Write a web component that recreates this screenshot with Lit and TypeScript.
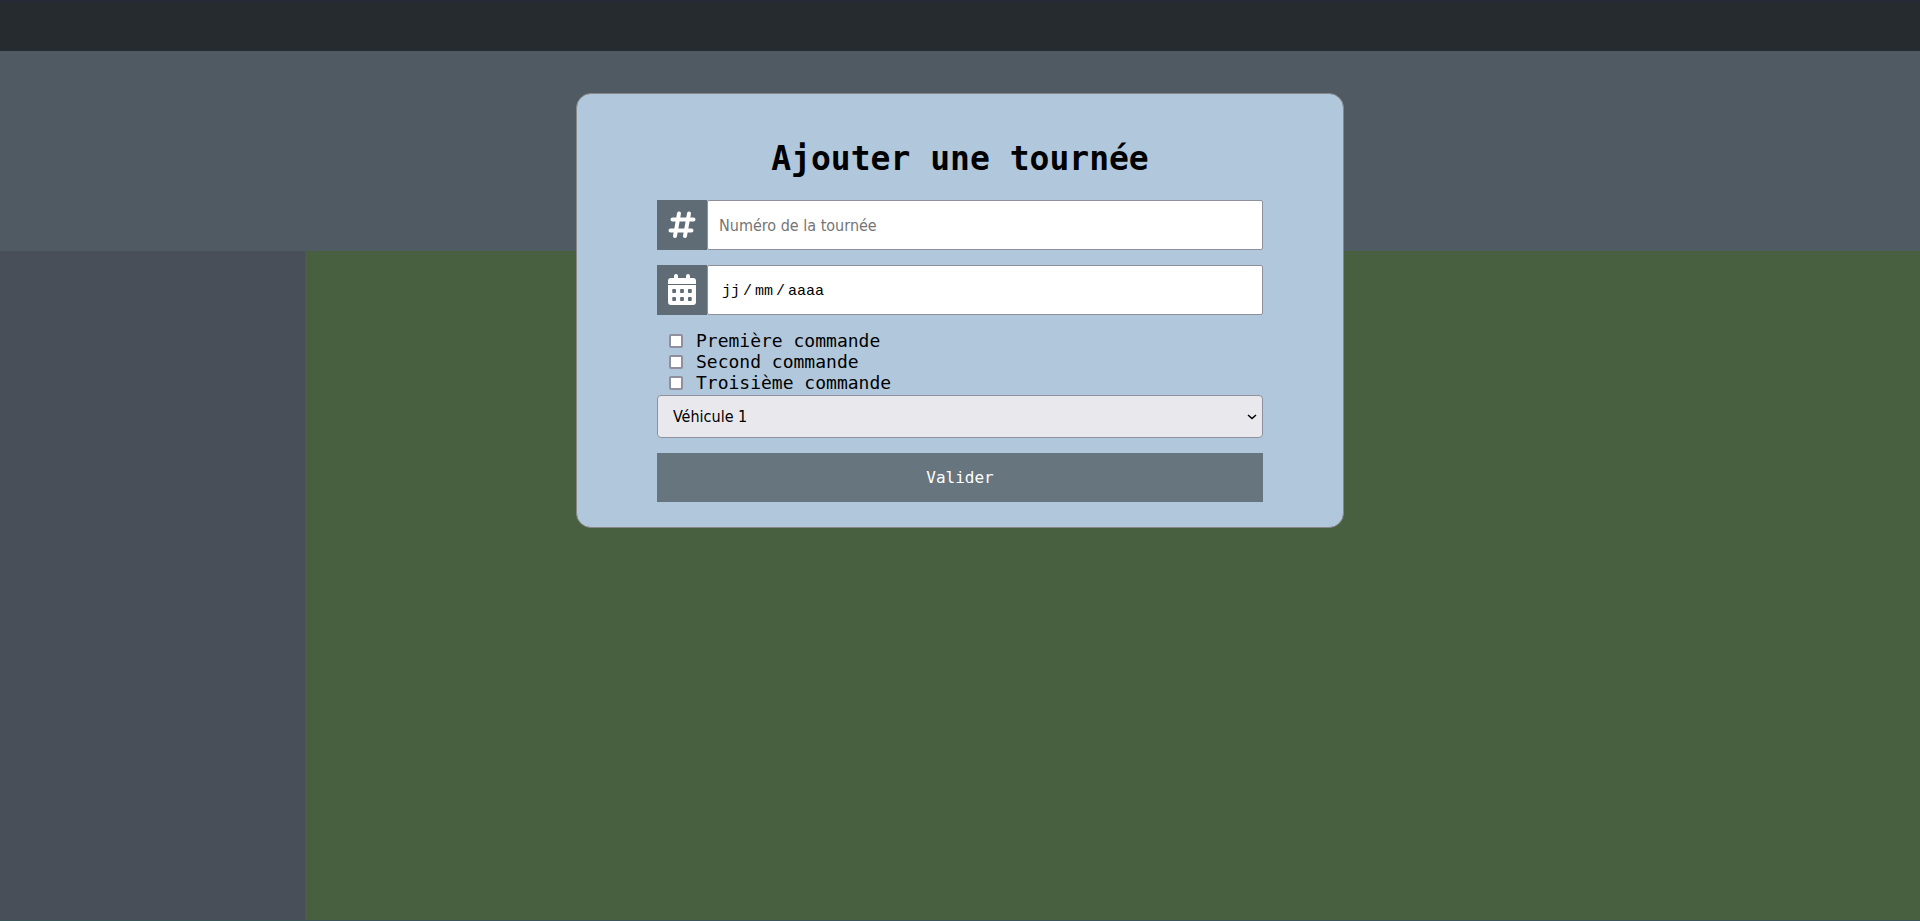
import { LitElement, html, css } from "lit";
import { customElement, state } from "lit/decorators.js";

const ORDERS = ["Première commande", "Second commande", "Troisième commande"];
const VEHICLES = ["Véhicule 1", "Véhicule 2", "Véhicule 3"];

@customElement("tour-form")
export class TourForm extends LitElement {
  static styles = css`
    :host {
      display: block;
      box-sizing: border-box;
      width: 40%;
      padding: 45px 80px 25px;
      border: 1px solid #888;
      border-radius: 15px;
      background: #b1c8dc;
      color: #000;
      font-family: "DejaVu Sans Mono", monospace;
      font-size: 18px;
    }
    h1 {
      margin: 0 0 21px;
      font-size: 33px;
      line-height: 40px;
      font-weight: 700;
      text-align: center;
    }
    .field {
      display: flex;
      height: 50px;
      margin-bottom: 15px;
    }
    .icon {
      flex: none;
      display: flex;
      align-items: center;
      justify-content: center;
      width: 50px;
      background: #5f6c75;
      color: #fff;
    }
    .icon svg {
      height: 32px;
      fill: currentColor;
    }
    .text {
      flex: 1;
      min-width: 0;
      box-sizing: border-box;
      padding: 0 11px;
      border: 1px solid #8f8f9d;
      border-radius: 2px;
      background: #fff;
      color: #000;
      font: 16px "DejaVu Sans Condensed", "Noto Sans", sans-serif;
    }
    .text::placeholder {
      color: #757575;
      opacity: 1;
    }
    .date {
      padding: 2px 14px 0;
      font: 15px "Liberation Mono", monospace;
    }
    .date::placeholder {
      color: #000;
    }
    .orders {
      display: grid;
      margin: 0;
      padding: 0 12px 2px;
      border: 0;
    }
    .order {
      display: flex;
      align-items: center;
      gap: 13px;
      line-height: 21px;
    }
    .order input {
      appearance: none;
      flex: none;
      box-sizing: border-box;
      width: 14px;
      height: 14px;
      margin: 0;
      border: 2px solid #8f8f9d;
      border-radius: 2px;
      background: #fff;
    }
    .order input:checked {
      border-color: #0060df;
      background: #0060df;
    }
    .picker {
      display: grid;
      align-items: center;
      margin-bottom: 15px;
    }
    .picker > * {
      grid-area: 1 / 1;
    }
    select {
      appearance: none;
      width: 100%;
      height: 43px;
      margin: 0;
      padding: 0 15px;
      border: 1px solid #8f8f9d;
      border-radius: 4px;
      background: #e9e9ed;
      color: #000;
      font: 16px "DejaVu Sans Condensed", "Noto Sans", sans-serif;
    }
    .chevron {
      justify-self: end;
      width: 10px;
      height: 8px;
      margin-right: 6px;
      fill: none;
      stroke: #000;
      stroke-width: 1.5;
      pointer-events: none;
    }
    button {
      display: block;
      width: 100%;
      height: 49px;
      border: 0;
      background: #67757e;
      color: #fff;
      font: 16px "DejaVu Sans Mono", monospace;
      cursor: pointer;
    }
  `;

  render() {
    return html`
      <h1>Ajouter une tournée</h1>
      <form @submit=${(e: Event) => e.preventDefault()}>
        <div class="field">
          <label class="icon" for="number">
            <svg viewBox="0 0 32 32" width="32" aria-hidden="true">
              <g fill="none" stroke="currentColor" stroke-width="4" stroke-linecap="round">
                <path d="M13 4.500 9 27M23 4.500 19 27M6.500 10.500H27.500M4.500 21.500H25.500" />
              </g>
            </svg>
          </label>
          <input id="number" class="text" type="text" aria-label="Numéro de la tournée" placeholder="Numéro de la tournée" />
        </div>
        <div class="field">
          <label class="icon" for="date">
            <svg viewBox="0 0 448 512" width="28" aria-hidden="true">
              <path
                fill-rule="evenodd"
                d="M96 32a32 32 0 0 1 64 0v32h128V32a32 32 0 0 1 64 0v32h48a48 48 0 0 1 48 48v48H0v-48a48 48 0 0 1 48-48h48zM0 176h448v272a48 48 0 0 1-48 48H48a48 48 0 0 1-48-48zM80 240a12 12 0 0 0-12 12v40a12 12 0 0 0 12 12h36a12 12 0 0 0 12-12v-40a12 12 0 0 0-12-12zM206 240a12 12 0 0 0-12 12v40a12 12 0 0 0 12 12h36a12 12 0 0 0 12-12v-40a12 12 0 0 0-12-12zM332 240a12 12 0 0 0-12 12v40a12 12 0 0 0 12 12h36a12 12 0 0 0 12-12v-40a12 12 0 0 0-12-12zM80 368a12 12 0 0 0-12 12v40a12 12 0 0 0 12 12h36a12 12 0 0 0 12-12v-40a12 12 0 0 0-12-12zM206 368a12 12 0 0 0-12 12v40a12 12 0 0 0 12 12h36a12 12 0 0 0 12-12v-40a12 12 0 0 0-12-12zM332 368a12 12 0 0 0-12 12v40a12 12 0 0 0 12 12h36a12 12 0 0 0 12-12v-40a12 12 0 0 0-12-12z"
              />
            </svg>
          </label>
          <input
            id="date"
            class="text date"
            type="text"
            inputmode="numeric"
            aria-label="Date de la tournée"
            placeholder=${"jj\u2009/\u2009mm\u2009/\u2009aaaa"}
          />
        </div>
        <fieldset class="orders" aria-label="Commandes">
          ${ORDERS.map(
            (name, i) => html`
              <label class="order" for="order-${i}">
                <input id="order-${i}" type="checkbox" name="orders" .value=${name} />
                ${name}
              </label>
            `
          )}
        </fieldset>
        <div class="picker">
          <select aria-label="Véhicule">
            ${VEHICLES.map((name) => html`<option>${name}</option>`)}
          </select>
          <svg class="chevron" viewBox="0 0 10 8" aria-hidden="true">
            <path d="M1 2 5 5.500 9 2" />
          </svg>
        </div>
        <button type="submit">Valider</button>
      </form>
    `;
  }
}

@customElement("app-root")
export class AppRoot extends LitElement {
  @state() private open = true;

  static styles = css`
    :host {
      display: grid;
      grid-template: 51px 200px 1fr / 305px 1fr;
      min-height: 100vh;
      background: #48603f;
    }
    .topbar {
      grid-column: 1 / -1;
      box-sizing: border-box;
      border-top: 1px solid #26293b;
      background: #262b2f;
    }
    .banner {
      grid-column: 1 / -1;
      background: #505a62;
    }
    .sidebar {
      background: #494f59;
    }
    .content {
      background: #48603f;
    }
    .sidebar,
    .content {
      border-bottom: 1px solid #3c5558;
    }
    .overlay {
      position: absolute;
      inset: 0;
      display: flex;
      align-items: flex-start;
      justify-content: center;
      padding-top: 93px;
    }
  `;

  render() {
    return html`
      <header class="topbar"></header>
      <section class="banner"></section>
      <aside class="sidebar"></aside>
      <main class="content"></main>
      ${this.open
        ? html`<div class="overlay" role="dialog" aria-label="Ajouter une tournée">
            <tour-form></tour-form>
          </div>`
        : null}
    `;
  }
}
